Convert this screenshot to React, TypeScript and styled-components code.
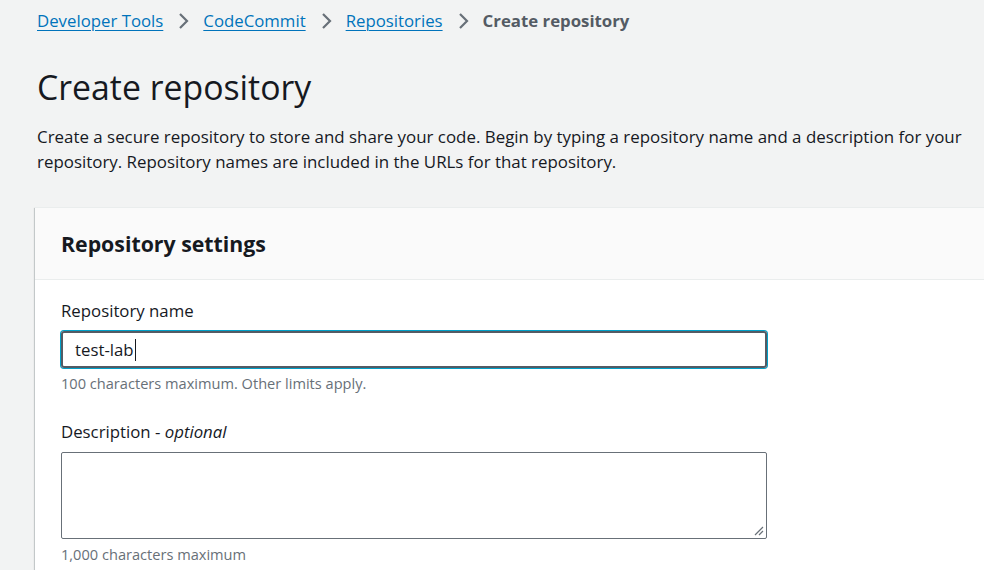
import React from "react";
import styled, { createGlobalStyle } from "styled-components";

const GlobalStyle = createGlobalStyle`
  html, body { margin: 0; padding: 0; background: #f2f3f3; }
  body { font-family: "Open Sans", "Noto Sans", Arial, sans-serif; color: #16191f; overflow: hidden; }
  * { box-sizing: border-box; }
`;

const Page = styled.div`
  width: 984px;
  height: 570px;
  overflow: hidden;
  padding: 0 0 0 37px;
`;

const Breadcrumbs = styled.nav`
  display: flex;
  align-items: center;
  height: 41px;
  font-size: 16.8px;
`;

const Crumb = styled.a`
  color: #0073bb;
  text-decoration: underline;
  text-underline-offset: 3px;
  text-decoration-thickness: 1px;
`;

const Current = styled.span`
  color: #545b64;
  font-weight: 700;
`;

const Sep = styled.span`
  display: inline-flex;
  margin: 0 14px 0 14px;
  color: #687078;
`;

const Title = styled.h1`
  margin: 26px 0 0 0;
  font-size: 33.8px;
  font-weight: 400;
  line-height: 40px;
  color: #16191f;
`;

const Intro = styled.p`
  margin: 17px 0 0 0;
  font-size: 16.9px;
  line-height: 25px;
  color: #16191f;
  width: 945px;
`;

const Container = styled.section`
  margin: 33px 0 0 -2px;
  background: #fff;
  box-shadow: 0 1px 1px 0 rgba(0, 28, 36, 0.3), 1px 1px 1px 0 rgba(0, 28, 36, 0.15), -1px 1px 1px 0 rgba(0, 28, 36, 0.15);
  border-top: 1px solid #eaeded;
`;

const Header = styled.div`
  background: #fafafa;
  border-bottom: 1px solid #eaeded;
  height: 72px;
  display: flex;
  align-items: center;
  padding-left: 26px;
`;

const HeaderTitle = styled.h2`
  margin: 0;
  font-size: 21.3px;
  font-weight: 700;
  color: #16191f;
`;

const Body = styled.div`
  padding: 20px 26px 60px 26px;
`;

const Field = styled.div<{ $mb?: number }>`
  display: flex;
  flex-direction: column;
  width: 706px;
  margin-bottom: ${(p) => p.$mb ?? 0}px;
`;

const Label = styled.label`
  font-size: 16.8px;
  line-height: 22px;
  color: #16191f;
  margin-bottom: 9px;
  em { font-style: italic; }
`;

const Input = styled.div`
  height: 37px;
  border: 2px solid #545b64;
  border-radius: 3px;
  box-shadow: 0 0 0 1px #00a1c9;
  display: flex;
  align-items: center;
  padding-left: 12px;
  font-size: 16.8px;
  color: #16191f;
`;

const Caret = styled.span`
  display: inline-block;
  width: 1px;
  height: 22px;
  background: #16191f;
  margin-left: 1px;
`;

const TextArea = styled.div`
  position: relative;
  height: 87px;
  border: 1px solid #687078;
  border-radius: 2px;
  background: #fff;
`;

const Grip = styled.svg`
  position: absolute;
  right: 2px;
  bottom: 2px;
`;

const Hint = styled.div<{ $mt?: number }>`
  font-size: 14.6px;
  line-height: 20px;
  color: #687078;
  margin-top: ${(p) => p.$mt ?? 5}px;
`;

const Chevron = () => (
  <svg width="12" height="18" viewBox="0 0 12 18">
    <path d="M3 2 L10 9 L3 16" fill="none" stroke="#687078" strokeWidth="2.2" />
  </svg>
);

export default function App() {
  return (
    <Page>
      <GlobalStyle />
      <Breadcrumbs>
        <Crumb>Developer Tools</Crumb>
        <Sep><Chevron /></Sep>
        <Crumb>CodeCommit</Crumb>
        <Sep><Chevron /></Sep>
        <Crumb>Repositories</Crumb>
        <Sep><Chevron /></Sep>
        <Current>Create repository</Current>
      </Breadcrumbs>
      <Title>Create repository</Title>
      <Intro>
        Create a secure repository to store and share your code. Begin by typing a repository name and a description for your repository. Repository names are included in the URLs for that repository.
      </Intro>
      <Container>
        <Header>
          <HeaderTitle>Repository settings</HeaderTitle>
        </Header>
        <Body>
          <Field $mb={28}>
            <Label>Repository name</Label>
            <Input>test-lab<Caret /></Input>
            <Hint>100 characters maximum. Other limits apply.</Hint>
          </Field>
          <Field>
            <Label>Description - <em>optional</em></Label>
            <TextArea>
              <Grip width="10" height="10" viewBox="0 0 10 10">
                <path d="M9 1 L1 9 M9 5 L5 9" stroke="#687078" strokeWidth="1.2" />
              </Grip>
            </TextArea>
            <Hint $mt={5}>1,000 characters maximum</Hint>
          </Field>
        </Body>
      </Container>
    </Page>
  );
}
